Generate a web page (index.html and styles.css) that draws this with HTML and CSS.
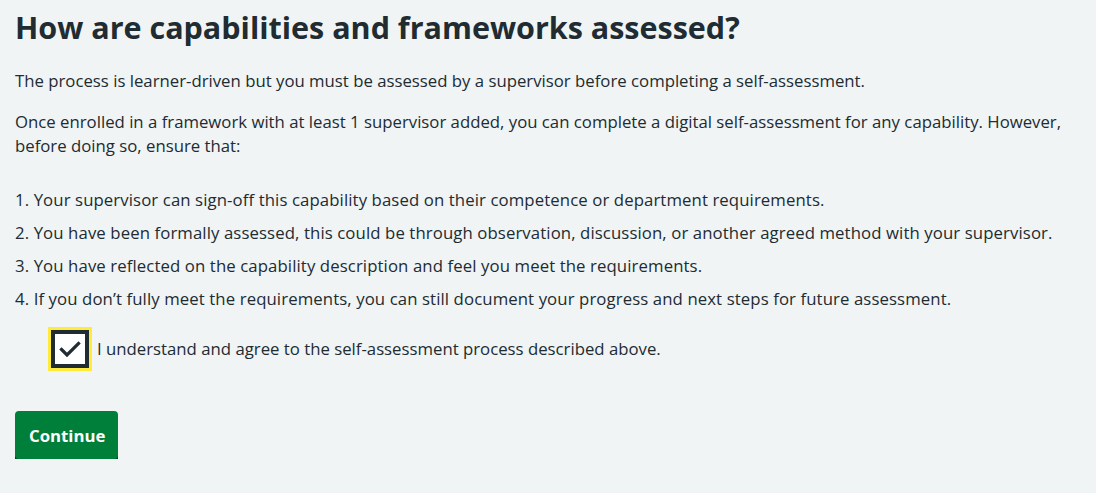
FILE: index.html
```html
<!DOCTYPE html>
<html lang="en">
<head>
<meta charset="utf-8">
<title>How are capabilities and frameworks assessed?</title>
<link rel="stylesheet" href="styles.css">
</head>
<body>
<main class="page">
  <h1 class="heading">How are capabilities and frameworks assessed?</h1>
  <p class="para">The process is learner-driven but you must be assessed by a supervisor before completing a self-assessment.</p>
  <p class="para para-last">Once enrolled in a framework with at least 1 supervisor added, you can complete a digital self-assessment for any capability. However, before doing so, ensure that:</p>
  <ol class="steps">
    <li>Your supervisor can sign-off this capability based on their competence or department requirements.</li>
    <li>You have been formally assessed, this could be through observation, discussion, or another agreed method with your supervisor.</li>
    <li>You have reflected on the capability description and feel you meet the requirements.</li>
    <li>If you don’t fully meet the requirements, you can still document your progress and next steps for future assessment.</li>
  </ol>
  <label class="check">
    <span class="check-box">
      <svg width="24" height="24" viewBox="0 0 24 24"><path d="M3.5 12.5 L9 18 L20.5 6.5" fill="none" stroke="#212b32" stroke-width="3.2" stroke-linecap="square" stroke-linejoin="miter"/></svg>
    </span>
    <span class="check-label">I understand and agree to the self-assessment process described above.</span>
  </label>
  <button class="btn" type="button">Continue</button>
</main>
</body>
</html>
```
FILE: styles.css
```css
html, body {
  margin: 0;
  padding: 0;
  background: #f0f4f5;
}
body {
  font-family: "Open Sans", "Noto Sans", Arial, sans-serif;
  color: #212b32;
  font-size: 16.75px;
  line-height: 24px;
}
.page {
  padding: 9px 15px 0 15px;
}
.heading {
  font-size: 30.5px;
  line-height: 36px;
  font-weight: 700;
  margin: 0 0 24px 0;
}
.para {
  margin: 0 0 17px 0;
}
.para-last {
  margin-bottom: 30px;
}
.steps {
  margin: 0 0 19px 0;
  padding: 0;
  list-style-position: inside;
  letter-spacing: 0.1px;
}
.steps li {
  margin-bottom: 9px;
}
.check {
  display: flex;
  align-items: center;
  gap: 8px;
  margin-left: 36px;
  margin-bottom: 43px;
}
.check-box {
  box-sizing: border-box;
  width: 38px;
  height: 38px;
  border: 4px solid #212b32;
  background: #ffffff;
  box-shadow: 0 0 0 3px #ffeb3b;
  display: flex;
  align-items: center;
  justify-content: center;
}
.btn {
  display: block;
  font-family: inherit;
  font-size: 16.75px;
  font-weight: 700;
  color: #ffffff;
  background: #007f3b;
  border: 0;
  border-radius: 4px;
  box-shadow: 0 4px 0 #00401e;
  padding: 0 14px;
  height: 48px;
  width: 103px;
}
```
